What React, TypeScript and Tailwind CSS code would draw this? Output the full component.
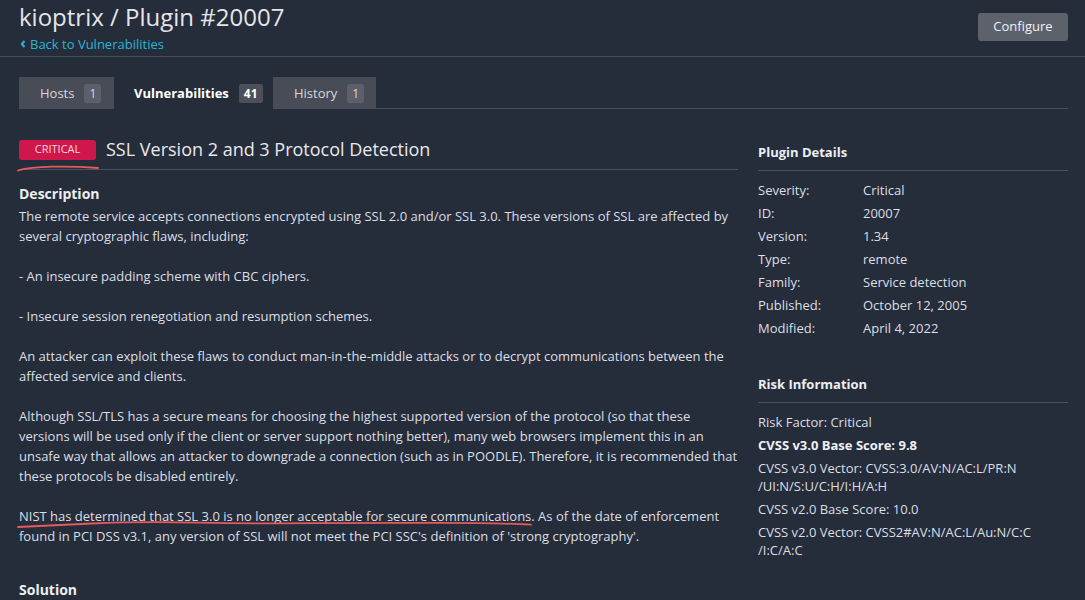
import React from "react";

const desc = `The remote service accepts connections encrypted using SSL 2.0 and/or SSL 3.0. These versions of SSL are affected by several cryptographic flaws, including:

- An insecure padding scheme with CBC ciphers.

- Insecure session renegotiation and resumption schemes.

An attacker can exploit these flaws to conduct man-in-the-middle attacks or to decrypt communications between the affected service and clients.

Although SSL/TLS has a secure means for choosing the highest supported version of the protocol (so that these versions will be used only if the client or server support nothing better), many web browsers implement this in an unsafe way that allows an attacker to downgrade a connection (such as in POODLE). Therefore, it is recommended that these protocols be disabled entirely.

NIST has determined that SSL 3.0 is no longer acceptable for secure communications. As of the date of enforcement found in PCI DSS v3.1, any version of SSL will not meet the PCI SSC's definition of 'strong cryptography'.`;

const details: [string, string][] = [
  ["Severity:", "Critical"],
  ["ID:", "20007"],
  ["Version:", "1.34"],
  ["Type:", "remote"],
  ["Family:", "Service detection"],
  ["Published:", "October 12, 2005"],
  ["Modified:", "April 4, 2022"],
];

function Tab({
  label,
  count,
  active,
  cls,
}: {
  label: string;
  count: string;
  active?: boolean;
  cls: string;
}) {
  return (
    <div
      className={`flex h-[32px] items-center pt-[1px] text-[13px] ${cls} ${
        active ? "bg-[#252d3b] font-bold text-white" : "bg-[#484c57] text-[#d6d8dc]"
      }`}
    >
      <span>{label}</span>
      <span
        className={`ml-[10px] flex h-[19px] items-center justify-center rounded-[2px] px-[5px] text-[12px] ${
          active ? "bg-[#4b505b] font-bold text-white" : "bg-[#5c606a] text-[#d6d8dc]"
        }`}
      >
        {count}
      </span>
    </div>
  );
}

export default function App() {
  return (
    <div className="h-[600px] w-full overflow-hidden bg-[#252d3b] font-['Open_Sans',sans-serif] text-[#dcdfe4]">
      {/* header */}
      <div className="flex h-[57px] justify-between border-b border-[#434a58] pl-[19px] pr-[17px] pt-[3px]">
        <div>
          <div className="text-[24px] leading-[28px] text-[#e4e5e7]">kioptrix / Plugin #20007</div>
          <div className="mt-[4px] flex items-center text-[13px] leading-[18px] text-[#2ab4d6]">
            <svg width="6" height="8" viewBox="0 0 6 8" className="ml-[1px] mr-[4px]">
              <path d="M4.5 1 L1.8 4 L4.5 7" stroke="#2ab4d6" strokeWidth="2" fill="none" />
            </svg>
            <span>Back to Vulnerabilities</span>
          </div>
        </div>
        <button className="mt-[10px] h-[28px] w-[90px] rounded-[3px] bg-[#5d616b] text-[13px] text-[#f0f1f3]">
          Configure
        </button>
      </div>

      {/* tabs */}
      <div className="mt-[20px] flex pl-[19px] pr-[17px]">
        <Tab label="Hosts" count="1" cls="w-[95px] pl-[21px]" />
        <Tab label="Vulnerabilities" count="41" active cls="w-[159px] pl-[20px]" />
        <Tab label="History" count="1" cls="w-[103px] pl-[21px]" />
        <div className="h-[32px] flex-1 border-b border-[#4a5060]" />
      </div>

      {/* content */}
      <div className="flex gap-[20px] pl-[19px] pr-[17px] pt-[30px]">
        <div className="w-[719px] shrink-0">
          <div className="relative flex h-[31px] items-start border-b border-[#4b5260] pb-[10px]">
            <div className="flex h-[21px] items-center">
              <span className="flex h-[20px] w-[77px] items-center justify-center rounded-[3px] bg-[#d0174b] text-[11px] text-[#f6d3dc]">
                CRITICAL
              </span>
              <span className="ml-[10px] text-[18px] leading-[21px] text-[#e8e9eb]">
                SSL Version 2 and 3 Protocol Detection
              </span>
            </div>
            <svg className="absolute left-[-2px] top-[24px]" width="84" height="10" viewBox="0 0 84 10">
              <path d="M1 7.5 Q12 4 36 3.6 T81 5" stroke="#e65a5c" strokeWidth="1.8" fill="none" strokeLinecap="round" />
            </svg>
          </div>

          <div className="mt-[14px] text-[14px] font-bold leading-[20px] text-[#eceef0]">Description</div>
          <div className="relative mt-[2px]">
            <p className="whitespace-pre-line text-[13px] leading-[20px]">{desc}</p>
            <svg className="absolute left-[-2px] top-[312px]" width="520" height="12" viewBox="0 0 520 12">
              <path
                d="M1 9 Q30 7.5 75 5.5 T180 4.6 T300 5.2 T420 4.8 T514 6.6"
                stroke="#e65a5c"
                strokeWidth="1.8"
                fill="none"
                strokeLinecap="round"
              />
            </svg>
          </div>
          <div className="mt-[34px] text-[14px] font-bold leading-[20px] text-[#eceef0]">Solution</div>
        </div>

        <div className="w-[310px] shrink-0 text-[13px]">
          <div className="border-b border-[#4b5260] pb-[8px] pt-[3px] font-bold leading-[20px] text-[#eceef0]">
            Plugin Details
          </div>
          <div className="mt-[8px]">
            {details.map(([k, v]) => (
              <div key={k} className="flex leading-[23px]">
                <span className="w-[105px] shrink-0">{k}</span>
                <span>{v}</span>
              </div>
            ))}
          </div>

          <div className="mt-[34px] border-b border-[#4b5260] pb-[8px] font-bold leading-[20px] text-[#eceef0]">
            Risk Information
          </div>
          <div className="mt-[10px] leading-[18px]">
            <div className="mb-[5px]">Risk Factor: Critical</div>
            <div className="mb-[5px] font-bold text-[#f0f1f3]">CVSS v3.0 Base Score: 9.8</div>
            <div className="mb-[5px]">
              CVSS v3.0 Vector: CVSS:3.0/AV:N/AC:L/PR:N
              <br />
              /UI:N/S:U/C:H/I:H/A:H
            </div>
            <div className="mb-[5px]">CVSS v2.0 Base Score: 10.0</div>
            <div className="mb-[5px]">
              CVSS v2.0 Vector: CVSS2#AV:N/AC:L/Au:N/C:C
              <br />
              /I:C/A:C
            </div>
          </div>
        </div>
      </div>
    </div>
  );
}
